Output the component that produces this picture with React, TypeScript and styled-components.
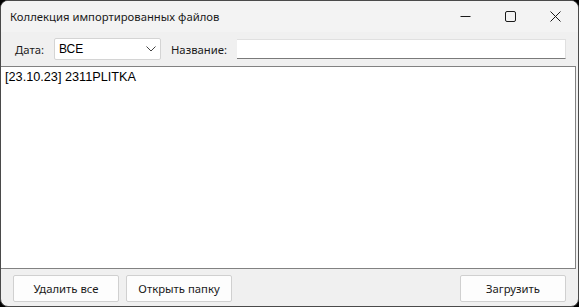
import React, { useState } from 'react';
import styled, { createGlobalStyle } from 'styled-components';

const GlobalStyle = createGlobalStyle`
  html, body {
    margin: 0;
    padding: 0;
    background: #000;
  }
  body {
    font-family: "Segoe UI", "Noto Sans", "Liberation Sans", sans-serif;
  }
`;

const Window = styled.div`
  box-sizing: border-box;
  width: 579px;
  height: 307px;
  border: 1px solid #4a4a4a;
  border-radius: 8px;
  background: #f0f0f0;
  display: flex;
  flex-direction: column;
  overflow: hidden;
`;

const TitleBar = styled.div`
  height: 31px;
  display: flex;
  align-items: center;
  background: #f3f3f3;
  padding-left: 9px;
`;

const Title = styled.div`
  flex: 1;
  font-size: 11.3px;
  color: #1a1a1a;
  margin-top: -1px;
`;

const CaptionButton = styled.div`
  width: 45px;
  height: 31px;
  display: flex;
  align-items: center;
  justify-content: center;
`;

const Toolbar = styled.div`
  height: 34px;
  display: flex;
  align-items: center;
  padding: 0 12px 0 14px;
`;

const Label = styled.span<{ $gap?: number }>`
  font-size: 11.3px;
  color: #1a1a1a;
  margin-right: ${(p) => p.$gap ?? 8}px;
`;

const Combo = styled.div`
  box-sizing: border-box;
  width: 107px;
  height: 22px;
  background: #fff;
  border: 1px solid #d4d4d4;
  border-radius: 2px;
  display: flex;
  align-items: center;
  padding: 0 4px 0 4px;
  margin-right: 10px;
  font-family: "Liberation Sans", Arial, sans-serif;
  font-size: 12px;
  color: #000;
`;

const ComboText = styled.span`
  flex: 1;
`;

const TextBox = styled.input`
  box-sizing: border-box;
  flex: 1;
  height: 20px;
  border: none;
  border-bottom: 1px solid #7a7a7a;
  border-right: 1px solid #e0e0e0;
  border-top: 1px solid #e0e0e0;
  background: #fff;
  outline: none;
  padding: 0 3px;
  font-family: "Liberation Sans", Arial, sans-serif;
  font-size: 12px;
`;

const ListBox = styled.div`
  box-sizing: border-box;
  height: 203px;
  margin-right: 2px;
  background: #fff;
  border-top: 1px solid #828282;
  border-right: 1px solid #828282;
  border-bottom: 1px solid #828282;
  padding: 2px 4px;
`;

const ListItem = styled.div`
  font-family: "Liberation Sans", Arial, sans-serif;
  font-size: 12.7px;
  line-height: 16px;
  color: #000;
`;

const Footer = styled.div`
  flex: 1;
  display: flex;
  align-items: center;
  padding: 0 12px 0 12px;
  gap: 7px;
`;

const Button = styled.button<{ $push?: boolean }>`
  box-sizing: border-box;
  width: 106px;
  height: 27px;
  background: #fdfdfd;
  border: 1px solid #d0d0d0;
  border-radius: 2px;
  font-family: "Segoe UI", "Noto Sans", "Liberation Sans", sans-serif;
  font-size: 11.3px;
  color: #1a1a1a;
  padding: 0;
  margin-left: ${(p) => (p.$push ? 'auto' : '0')};
  margin-top: 1px;
`;

const App = () => {
  const [name, setName] = useState('');
  const files = ['[23.10.23] 2311PLITKA'];

  return (
    <>
      <GlobalStyle />
      <Window>
        <TitleBar>
          <Title>Коллекция импортированных файлов</Title>
          <CaptionButton>
            <svg width="11" height="11" viewBox="0 0 11 11">
              <line x1="0.5" y1="5.5" x2="10.5" y2="5.5" stroke="#1a1a1a" strokeWidth="1" />
            </svg>
          </CaptionButton>
          <CaptionButton>
            <svg width="11" height="11" viewBox="0 0 11 11">
              <rect x="0.5" y="0.5" width="10" height="10" rx="1.5" fill="none" stroke="#1a1a1a" strokeWidth="1" />
            </svg>
          </CaptionButton>
          <CaptionButton>
            <svg width="11" height="11" viewBox="0 0 11 11">
              <path d="M0.5 0.5 L10.5 10.5 M10.5 0.5 L0.5 10.5" stroke="#1a1a1a" strokeWidth="1" />
            </svg>
          </CaptionButton>
        </TitleBar>

        <Toolbar>
          <Label $gap={10}>Дата:</Label>
          <Combo>
            <ComboText>ВСЕ</ComboText>
            <svg width="10" height="6" viewBox="0 0 10 6">
              <path d="M0.5 0.5 L5 5 L9.5 0.5" fill="none" stroke="#444" strokeWidth="1" />
            </svg>
          </Combo>
          <Label $gap={10}>Название:</Label>
          <TextBox value={name} onChange={(e) => setName(e.target.value)} />
        </Toolbar>

        <ListBox>
          {files.map((f, i) => (
            <ListItem key={i}>{f}</ListItem>
          ))}
        </ListBox>

        <Footer>
          <Button>Удалить все</Button>
          <Button>Открыть папку</Button>
          <Button $push>Загрузить</Button>
        </Footer>
      </Window>
    </>
  );
};

export default App;
